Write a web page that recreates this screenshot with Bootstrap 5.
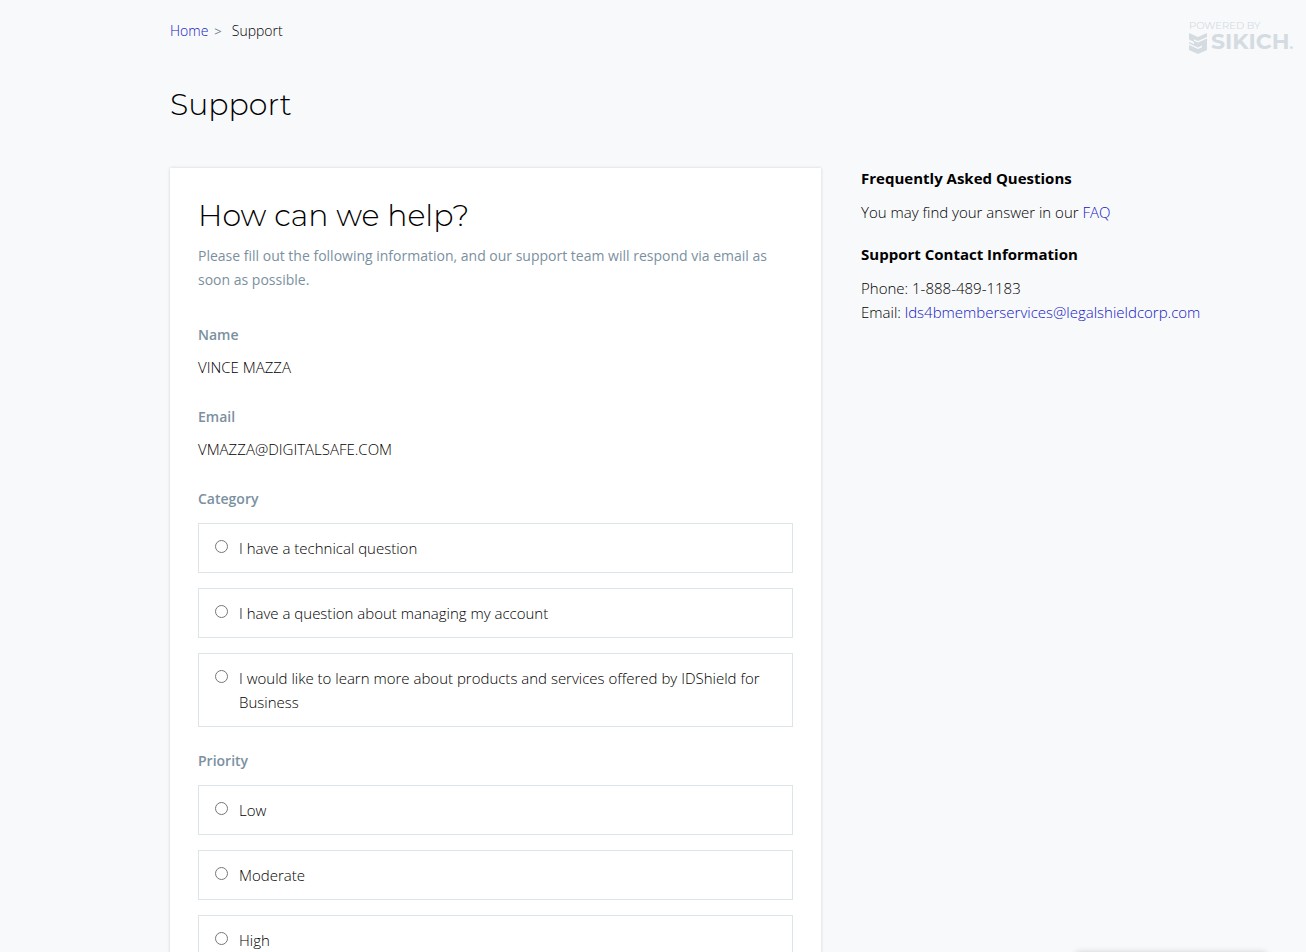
<!DOCTYPE html>
<html lang="en">
<head>
<meta charset="utf-8">
<meta name="viewport" content="width=device-width, initial-scale=1">
<title>Support</title>
<link href="https://cdn.jsdelivr.net/npm/bootstrap@5.3.0/dist/css/bootstrap.min.css" rel="stylesheet">
<script src="https://cdn.jsdelivr.net/npm/bootstrap@5.3.0/dist/js/bootstrap.bundle.min.js" defer></script>
<style>
body{background:#f8f9fb;color:#000;font-family:"Open Sans","Noto Sans",sans-serif;font-size:15px;font-weight:300;line-height:24px}
a{color:#1216c4;text-decoration:none}
.page-wrap{padding:19px 38px 40px 170px}
.breadcrumb{--bs-breadcrumb-divider:">";--bs-breadcrumb-divider-color:#6f8593;--bs-breadcrumb-item-active-color:#000;font-size:14px}
.breadcrumb-item + .breadcrumb-item{padding-left:6px}
.breadcrumb-item + .breadcrumb-item::before{padding-right:10px;font-size:13px;font-weight:400}
.title-text{font-family:Montserrat,"Open Sans",sans-serif;font-size:30px;font-weight:300;line-height:36px;color:#000}
.page-title{margin:44px 0 45px}
.support-grid{display:grid;grid-template-columns:8fr 5fr;gap:40px}
.panel{background:#fff;padding:30px 28px 40px;box-shadow:0 0 3px rgba(0,0,0,.16)}
.panel-title{margin:0 0 10px}
.intro{color:#7b909f;font-weight:400;font-size:14px;margin:0 0 31px}
.field-label{display:block;float:none;color:#7b909f;font-size:14px;line-height:24px;font-weight:600;margin:0}
.field{margin-bottom:26px}
.field dd{margin:8px 0 0}
.choice{display:flex;gap:11px;border:1px solid #dce6ea;padding:12px 16px}
.choice input{flex:none;width:13px;height:13px;margin:4px 0 0}
.choices{display:grid;gap:15px;margin:12px 0 22px}
.side-title{font-size:15px;line-height:20px;font-weight:700;color:#000;margin:0 0 12px}
.powered{position:absolute;top:20px;right:10px;color:#d4dce1;font-family:Montserrat,"Open Sans",sans-serif;width:107px}
.powered-by{font-size:10px;line-height:12px;font-weight:400}
.powered-name{font-size:22px;line-height:20px;font-weight:700}
.powered-dot{font-size:14px}
.chat-dock{top:100%;right:40px;width:190px;height:40px;box-shadow:0 0 6px rgba(0,0,0,.16)}
@media (max-width:991px){.page-wrap{padding:60px 20px 40px}.support-grid{grid-template-columns:1fr}}
</style>
</head>
<body>
<a class="powered" href="#" aria-label="Powered by Sikich">
  <div class="powered-by text-nowrap">POWERED BY</div>
  <div class="d-flex align-items-center">
    <svg width="18" height="21" viewBox="0 0 18 21" fill="currentColor" class="me-1 flex-shrink-0" aria-hidden="true">
      <path d="M0 0L9 4L18 0V4L9 8L5 6.200V7.800L9 9.600L18 5.600V17L9 21L0 17V12L9 16L13 14.200V12.600L9 14.400L0 10.400V9L5 11V9L0 6.500Z"/>
    </svg>
    <div class="powered-name">SIKICH<span class="powered-dot">.</span></div>
  </div>
</a>
<div class="page-wrap">
  <nav aria-label="breadcrumb">
    <ol class="breadcrumb mb-0">
      <li class="breadcrumb-item"><a href="#">Home</a></li>
      <li class="breadcrumb-item active" aria-current="page">Support</li>
    </ol>
  </nav>
  <h1 class="title-text page-title">Support</h1>
  <div class="support-grid">
    <main class="panel">
      <h2 class="title-text panel-title">How can we help?</h2>
      <p class="intro">Please fill out the following information, and our support team will respond via email as soon as possible.</p>
      <form>
        <dl class="mb-0">
          <div class="field"><dt class="field-label">Name</dt><dd>VINCE MAZZA</dd></div>
          <div class="field"><dt class="field-label">Email</dt><dd>VMAZZA@DIGITALSAFE.COM</dd></div>
        </dl>
        <fieldset>
          <legend class="field-label">Category</legend>
          <div class="choices">
            <label class="choice"><input type="radio" name="category"><span>I have a technical question</span></label>
            <label class="choice"><input type="radio" name="category"><span>I have a question about managing my account</span></label>
            <label class="choice"><input type="radio" name="category"><span>I would like to learn more about products and services offered by IDShield for Business</span></label>
          </div>
        </fieldset>
        <fieldset>
          <legend class="field-label">Priority</legend>
          <div class="choices">
            <label class="choice"><input type="radio" name="priority"><span>Low</span></label>
            <label class="choice"><input type="radio" name="priority"><span>Moderate</span></label>
            <label class="choice"><input type="radio" name="priority"><span>High</span></label>
          </div>
        </fieldset>
      </form>
    </main>
    <aside>
      <h3 class="side-title">Frequently Asked Questions</h3>
      <p class="mb-3 pb-1">You may find your answer in our <a href="#">FAQ</a></p>
      <h3 class="side-title">Support Contact Information</h3>
      <div>Phone: 1-888-489-1183</div>
      <div>Email: <a href="#">lds4bmemberservices@legalshieldcorp.com</a></div>
    </aside>
  </div>
</div>
<div class="chat-dock position-fixed" aria-hidden="true"></div>
</body>
</html>
